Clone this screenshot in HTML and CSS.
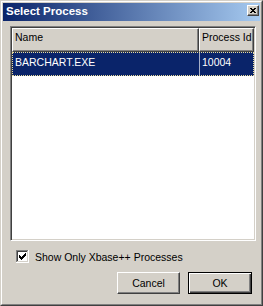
FILE: index.html
```html
<!DOCTYPE html>
<html lang="en">
<head>
  <meta charset="UTF-8" />
  <title>Select Process</title>
  <link rel="stylesheet" href="styles.css">
</head>
<body>
  <div class="window">
    <div class="frame">
      <div class="titlebar">
        <span class="title">Select Process</span>
        <span class="close">
          <svg width="10" height="9" viewBox="0 0 10 9" shape-rendering="crispEdges">
            <rect x="2" y="2" width="2" height="1"/><rect x="6" y="2" width="2" height="1"/>
            <rect x="3" y="3" width="2" height="1"/><rect x="5" y="3" width="2" height="1"/>
            <rect x="4" y="4" width="2" height="1"/>
            <rect x="3" y="5" width="2" height="1"/><rect x="5" y="5" width="2" height="1"/>
            <rect x="2" y="6" width="2" height="1"/><rect x="6" y="6" width="2" height="1"/>
          </svg>
        </span>
      </div>

      <div class="client">
        <div class="listview">
          <div class="lv-header">
            <div class="col col-name">Name</div>
            <div class="col col-pid">Process Id</div>
          </div>
          <div class="lv-row selected">
            <div class="cell cell-name">BARCHART.EXE</div>
            <div class="cell cell-pid">10004</div>
          </div>
        </div>

        <label class="check">
          <svg class="box" width="13" height="13" viewBox="0 0 13 13" shape-rendering="crispEdges">
            <rect x="0" y="0" width="13" height="13" fill="#ffffff"/>
            <rect x="0" y="0" width="12" height="1" fill="#808080"/>
            <rect x="0" y="0" width="1" height="12" fill="#808080"/>
            <rect x="1" y="1" width="10" height="1" fill="#404040"/>
            <rect x="1" y="1" width="1" height="10" fill="#404040"/>
            <rect x="1" y="11" width="11" height="1" fill="#d4d0c8"/>
            <rect x="11" y="1" width="1" height="11" fill="#d4d0c8"/>
            <g fill="#000">
              <rect x="3" y="5" width="1" height="3"/>
              <rect x="4" y="6" width="1" height="3"/>
              <rect x="5" y="7" width="1" height="3"/>
              <rect x="6" y="6" width="1" height="3"/>
              <rect x="7" y="5" width="1" height="3"/>
              <rect x="8" y="4" width="1" height="3"/>
              <rect x="9" y="3" width="1" height="3"/>
            </g>
          </svg>
          <span>Show Only Xbase++ Processes</span>
        </label>

        <div class="buttons">
          <button class="btn btn-cancel">Cancel</button>
          <button class="btn btn-ok default">OK</button>
        </div>
      </div>
    </div>
  </div>
</body>
</html>
```

FILE: styles.css
```css
body { margin: 0; background: #d4d0c8; font-family: "Liberation Sans", Arial, sans-serif; font-size: 10.5px; color: #000; }

.window {
  width: 263px;
  height: 306px;
  box-sizing: border-box;
  border: 1px solid;
  border-color: #d4d0c8 #404040 #404040 #d4d0c8;
  background: #d4d0c8;
}
.frame {
  height: 100%;
  box-sizing: border-box;
  border: 1px solid;
  border-color: #ffffff #808080 #808080 #ffffff;
  padding: 1px;
  display: flex;
  flex-direction: column;
}

.titlebar {
  height: 18px;
  display: flex;
  justify-content: space-between;
  align-items: flex-start;
  background: linear-gradient(to right, #0a246a, #a6caf0);
  color: #fff;
}
.title { font-size: 11.5px; font-weight: bold; line-height: 17px; padding-left: 3px; }
.close {
  width: 12px;
  height: 11px;
  box-sizing: border-box;
  margin: 2px 1px 0 0;
  border: 1px solid;
  border-color: #ffffff #404040 #404040 #ffffff;
  box-shadow: inset -1px -1px #808080;
  background: #d4d0c8;
  display: flex;
}
.close svg { display: block; }

.client {
  flex: 1;
  padding: 5px 4px 0 7px;
  display: flex;
  flex-direction: column;
}

.listview {
  height: 215px;
  box-sizing: border-box;
  border: 1px solid;
  border-color: #808080 #ffffff #ffffff #808080;
  box-shadow: inset 1px 1px #404040, inset -1px -1px #d4d0c8;
  padding: 1px;
  background: #fff;
}
.lv-header { display: flex; height: 24px; }
.col {
  box-sizing: border-box;
  height: 24px;
  border: 1px solid;
  border-color: #ffffff #404040 #404040 #ffffff;
  box-shadow: inset -1px -1px #808080;
  background: #d4d0c8;
  padding: 2px 0 0 2px;
  line-height: 13px;
  white-space: nowrap;
  overflow: hidden;
}
.col-name { width: 187px; }
.col-pid { flex: 1; }

.lv-row { display: flex; height: 24px; box-sizing: border-box; }
.lv-row.selected {
  background: #0a246a;
  color: #fff;
  border: 1px dotted #e8dc9c;
}
.cell { padding: 3px 0 0 2px; line-height: 13px; white-space: nowrap; }
.cell-name { width: 184px; }
.cell-pid { flex: 1; border-left: 1px solid #a8b0c8; }

.check {
  margin-top: 9px;
  padding-left: 6px;
  height: 13px;
  display: flex;
  align-items: center;
  gap: 6px;
}
.box { display: block; flex: none; }

.buttons {
  margin-top: 9px;
  padding-right: 4px;
  display: flex;
  justify-content: flex-end;
  gap: 8px;
}
.btn {
  height: 22px;
  box-sizing: border-box;
  padding: 0;
  font-family: "Liberation Sans", Arial, sans-serif;
  font-size: 10.5px;
  color: #000;
  background: #d4d0c8;
  border: 1px solid;
  border-color: #ffffff #404040 #404040 #ffffff;
  box-shadow: inset -1px -1px #808080;
}
.btn-cancel { width: 63px; }
.btn-ok { width: 64px; }
.btn.default {
  border: 1px solid #000;
  box-shadow: inset 1px 1px #ffffff, inset -1px -1px #404040, inset -2px -2px #808080;
}
```
